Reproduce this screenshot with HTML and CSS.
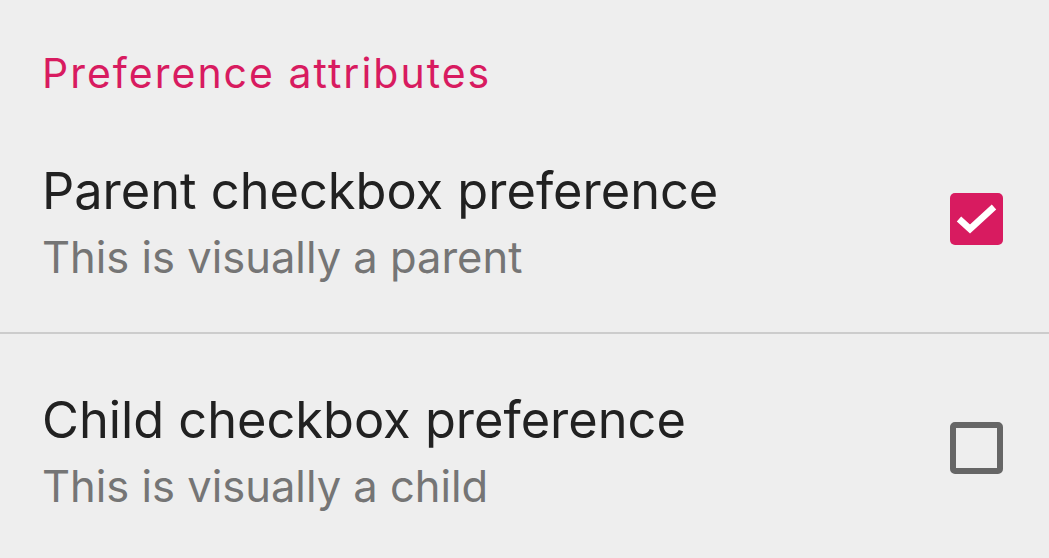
FILE: index.html
```html
<!DOCTYPE html>
<html>
<head>
<meta charset="utf-8">
<link rel="stylesheet" href="styles.css">
</head>
<body>
<div class="screen">
  <div class="category">Preference attributes</div>
  <div class="pref">
    <div class="texts">
      <div class="title">Parent checkbox preference</div>
      <div class="summary">This is visually a parent</div>
    </div>
    <div class="checkbox checked">
      <svg viewBox="0 0 53 52" width="53" height="52"><path d="M9 26 L20 36 L44 14" fill="none" stroke="#ffffff" stroke-width="6.5" stroke-linecap="butt" stroke-linejoin="miter"/></svg>
    </div>
  </div>
  <div class="divider"></div>
  <div class="pref">
    <div class="texts">
      <div class="title">Child checkbox preference</div>
      <div class="summary">This is visually a child</div>
    </div>
    <div class="checkbox"></div>
  </div>
</div>
</body>
</html>
```
FILE: styles.css
```css
html, body {
  margin: 0;
  padding: 0;
  background: #eeeeee;
}
.screen {
  font-family: Inter, Roboto, sans-serif;
  width: 1049px;
  height: 558px;
  overflow: hidden;
}
.category {
  height: 105px;
  box-sizing: border-box;
  padding: 49px 0 0 42px;
  font-size: 41px;
  line-height: 48px;
  letter-spacing: 2px;
  color: #d81b60;
}
.pref {
  height: 227px;
  box-sizing: border-box;
  padding: 56px 46px 0 42px;
  display: flex;
  align-items: flex-start;
  justify-content: space-between;
}
.texts {
  display: flex;
  flex-direction: column;
}
.title {
  font-size: 50.5px;
  line-height: 60px;
  color: #212121;
}
.summary {
  font-size: 43.5px;
  line-height: 50px;
  color: #757575;
  margin-top: 11px;
}
.divider {
  height: 2px;
  background: #cccccc;
}
.checkbox {
  align-self: center;
  margin-top: -56px;
  width: 53px;
  height: 52px;
  box-sizing: border-box;
  border: 6px solid #666666;
  border-radius: 5px;
}
.checkbox.checked {
  border: none;
  background: #d81b60;
}
.checkbox svg {
  display: block;
}
```
